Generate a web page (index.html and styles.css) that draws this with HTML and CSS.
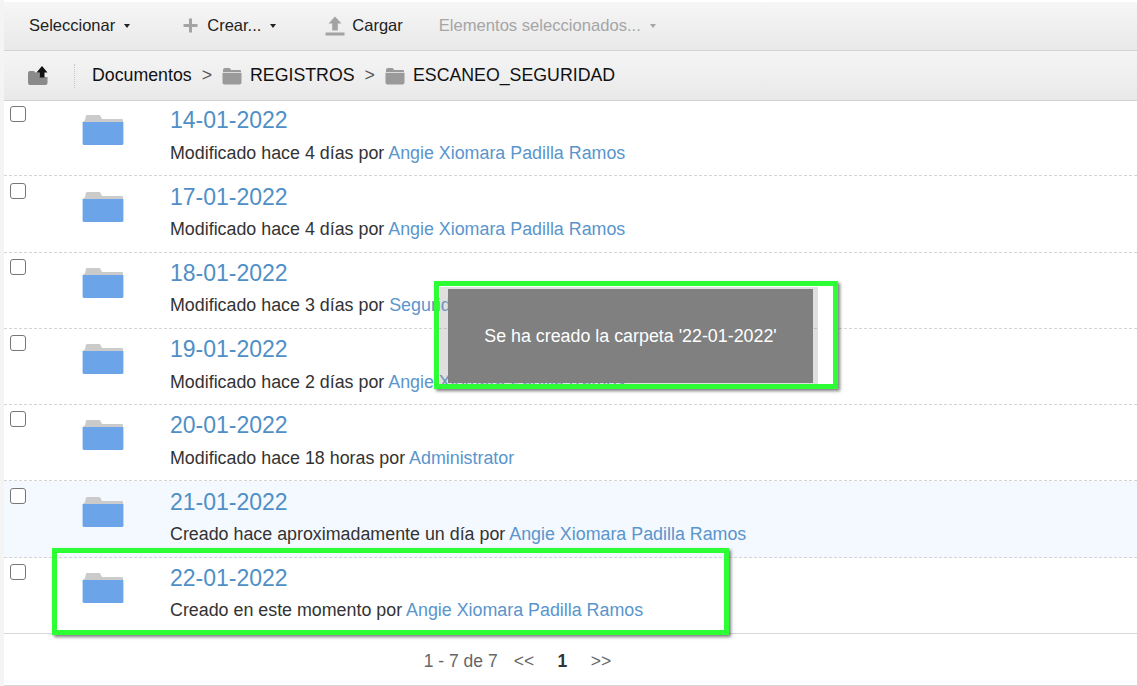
FILE: index.html
```html
<!DOCTYPE html>
<html lang="es">
<head>
<meta charset="utf-8">
<title>Documentos</title>
<link rel="stylesheet" href="styles.css">
</head>
<body>
<svg class="defs" width="0" height="0" aria-hidden="true">
  <symbol id="folder-blue" viewBox="0 0 42 32">
    <path d="M3 6 L4 1.500 Q4.300 1 5 1 H17 Q18 1 18.500 2 L20 5 H40 Q41 5 41 6 V8 H1 Z" fill="#cbcbcb"/>
    <path d="M0.600 8 H41.400 V29.500 Q41.400 31 39.900 31 H2.100 Q0.600 31 0.600 29.500 Z" fill="#6ca4ea"/>
  </symbol>
  <symbol id="folder-grey" viewBox="0 0 20 18">
    <path d="M1 3 Q1 1 3 1 H7 Q8 1 8.500 2 L9 3 H18 Q19 3 19 4 V5 H1 Z" fill="#9a9a9a"/>
    <path d="M0.500 5.800 H19.500 V15.500 Q19.500 17.500 17.500 17.500 H2.500 Q0.500 17.500 0.500 15.500 Z" fill="#9a9a9a"/>
  </symbol>
</svg>
<div class="app">
  <div class="toolbar">
    <div class="tool tool-select">Seleccionar<span class="caret"></span></div>
    <div class="tool tool-create">
      <svg class="plus" width="15" height="15" viewBox="0 0 15 15"><path d="M6 0.500h3v5.500h5.500v3H9v5.500H6V9H0.500V6H6z" fill="#a3a3a3"/></svg>
      Crear...<span class="caret"></span>
    </div>
    <div class="tool tool-upload">
      <svg class="upload" width="20" height="20" viewBox="0 0 20 20"><path d="M10 0.500 L16.500 7.500 H12.800 V14.500 H7.200 V7.500 H3.500 Z M0.500 16.500 H19.500 V19.500 H0.500 Z" fill="#a3a3a3"/></svg>
      Cargar
    </div>
    <div class="tool tool-disabled">Elementos seleccionados...<span class="caret caret-muted"></span></div>
  </div>
  <div class="crumbbar">
    <div class="up-wrap">
      <svg width="21" height="21" viewBox="0 0 21 21">
        <path d="M1 8 Q1 6 3 6 H7 L8.500 7.500 H12 V20 H3 Q1 20 1 18 Z M12 12 H20.500 V18 Q20.500 20 18.500 20 H12 Z" fill="#8a8a8a"/>
        <path d="M15 1 L20.500 7.500 H17.500 V12.500 H12.500 V7.500 H9.500 Z" fill="#111"/>
      </svg>
    </div>
    <div class="crumbs">
      <span>Documentos</span><span class="sep">&gt;</span>
      <svg class="crumb-folder" width="20" height="18"><use href="#folder-grey"/></svg><span>REGISTROS</span><span class="sep">&gt;</span>
      <svg class="crumb-folder" width="20" height="18"><use href="#folder-grey"/></svg><span>ESCANEO_SEGURIDAD</span>
    </div>
  </div>
  <div class="list">
    <div class="row"><div class="check"></div><svg class="folder" width="42" height="32"><use href="#folder-blue"/></svg><div class="info"><a class="title">14-01-2022</a><div class="meta">Modificado hace 4 días por <a>Angie Xiomara Padilla Ramos</a></div></div></div>
    <div class="row"><div class="check"></div><svg class="folder" width="42" height="32"><use href="#folder-blue"/></svg><div class="info"><a class="title">17-01-2022</a><div class="meta">Modificado hace 4 días por <a>Angie Xiomara Padilla Ramos</a></div></div></div>
    <div class="row"><div class="check"></div><svg class="folder" width="42" height="32"><use href="#folder-blue"/></svg><div class="info"><a class="title">18-01-2022</a><div class="meta">Modificado hace 3 días por <a>Seguridad</a></div></div></div>
    <div class="row"><div class="check"></div><svg class="folder" width="42" height="32"><use href="#folder-blue"/></svg><div class="info"><a class="title">19-01-2022</a><div class="meta">Modificado hace 2 días por <a>Angie Xiomara Padilla Ramos</a></div></div></div>
    <div class="row"><div class="check"></div><svg class="folder" width="42" height="32"><use href="#folder-blue"/></svg><div class="info"><a class="title">20-01-2022</a><div class="meta">Modificado hace 18 horas por <a>Administrator</a></div></div></div>
    <div class="row row-hover"><div class="check"></div><svg class="folder" width="42" height="32"><use href="#folder-blue"/></svg><div class="info"><a class="title">21-01-2022</a><div class="meta">Creado hace aproximadamente un día por <a>Angie Xiomara Padilla Ramos</a></div></div></div>
    <div class="row row-last"><div class="check"></div><svg class="folder" width="42" height="32"><use href="#folder-blue"/></svg><div class="info"><a class="title">22-01-2022</a><div class="meta">Creado en este momento por <a>Angie Xiomara Padilla Ramos</a></div></div></div>
  </div>
  <div class="pager">
    <span class="range">1 - 7 de 7</span><span class="nav">&lt;&lt;</span><b class="page">1</b><span class="nav">&gt;&gt;</span>
  </div>
</div>
<div class="highlight highlight-row"></div>
<div class="highlight highlight-toast">
  <div class="toast-back"></div>
  <div class="toast">Se ha creado la carpeta '22-01-2022'</div>
</div>
</body>
</html>
```
FILE: styles.css
```css
* { box-sizing: border-box; }
html, body { margin: 0; height: 686px; overflow: hidden; }
body {
  font-family: "Liberation Sans", Arial, sans-serif;
  background: #f4f4f4;
  position: relative;
}
.defs { position: absolute; }
.app {
  margin-left: 4px;
  padding-top: 2px;
  height: 686px;
  background: #fff;
  display: flex;
  flex-direction: column;
}
.toolbar {
  height: 49px;
  flex: none;
  display: flex;
  align-items: center;
  background: linear-gradient(#f6f6f6, #e9e9ea);
  border-bottom: 1px solid #d4d5d5;
  font-size: 16.500px;
  color: #222;
  padding-bottom: 1px;
}
.tool { display: flex; align-items: center; white-space: nowrap; }
.tool-select { margin-left: 25px; }
.tool-create { margin-left: 53px; }
.tool-upload { margin-left: 49px; }
.tool-disabled { margin-left: 36px; color: #a5a5a5; font-size: 16.600px; }
.plus { margin-right: 9px; }
.upload { margin-right: 7px; }
.caret {
  display: inline-block;
  width: 0; height: 0;
  margin-left: 9px;
  border-left: 3px solid transparent;
  border-right: 3px solid transparent;
  border-top: 4px solid #222;
}
.caret-muted { border-top-color: #a5a5a5; }
.crumbbar {
  height: 50px;
  flex: none;
  display: flex;
  align-items: center;
  background: linear-gradient(#f5f5f5, #e9e9ea);
  border-bottom: 1px solid #cfd3d5;
  font-size: 17.750px;
  color: #111;
}
.up-wrap {
  width: 71px;
  height: 24px;
  padding-left: 23px;
  border-right: 1px dotted #c6c6c6;
  display: flex;
  align-items: center;
}
.crumbs { display: flex; align-items: center; margin-left: 17px; }
.sep { color: #555; margin: 0 10px; }
.crumb-folder { margin-right: 8px; }
.list { flex: none; margin-top: -1px; }
.row {
  height: 76.300px;
  display: flex;
  align-items: flex-start;
  border-bottom: 1px dashed #d4d4d4;
}
.row-hover { background: #f4f9ff; }
.row-last { border-bottom: 1px solid #d8d8d8; }
.check {
  flex: none;
  width: 16px;
  height: 16px;
  margin: 6.250px 0 0 6px;
  border: 1px solid #767676;
  border-radius: 3px;
  background: #fff;
}
.folder { flex: none; margin: 14.250px 0 0 56px; filter: blur(0.4px); }
.info { margin-left: 46px; padding-top: 5.250px; }
.title {
  display: block;
  font-size: 23px;
  line-height: 30px;
  color: #4f8fc6;
}
.meta {
  font-size: 17.850px;
  line-height: 24px;
  margin-top: 5.400px;
  color: #333;
}
.meta a { color: #5a95cc; }
.pager {
  height: 52px;
  flex: none;
  display: flex;
  align-items: center;
  justify-content: center;
  font-size: 17.500px;
  color: #666;
  border-bottom: 1px solid #d8d8d8;
  padding: 3px 90px 0 0;
}
.nav { margin: 0 16px; }
.page { color: #333; margin: 0 7.500px; }
.highlight {
  position: absolute;
  border: 5px solid #2cff34;
  box-shadow: 2px 2px 3px rgba(70, 70, 70, 0.7);
}
.highlight-row { left: 52px; top: 548px; width: 677px; height: 87px; }
.highlight-toast {
  left: 434px;
  top: 281px;
  width: 404px;
  height: 108px;
  background: linear-gradient(to right, transparent 379px, #fff 379px);
}
.toast-back { position: absolute; left: 1px; top: 1px; width: 378px; height: 97px; background: rgba(150, 150, 150, 0.3); }
.toast {
  position: absolute;
  left: 9px;
  top: 3px;
  width: 365px;
  height: 94px;
  background: #808080;
  color: #fff;
  font-size: 17.850px;
  display: flex;
  align-items: center;
  justify-content: center;
}
```
